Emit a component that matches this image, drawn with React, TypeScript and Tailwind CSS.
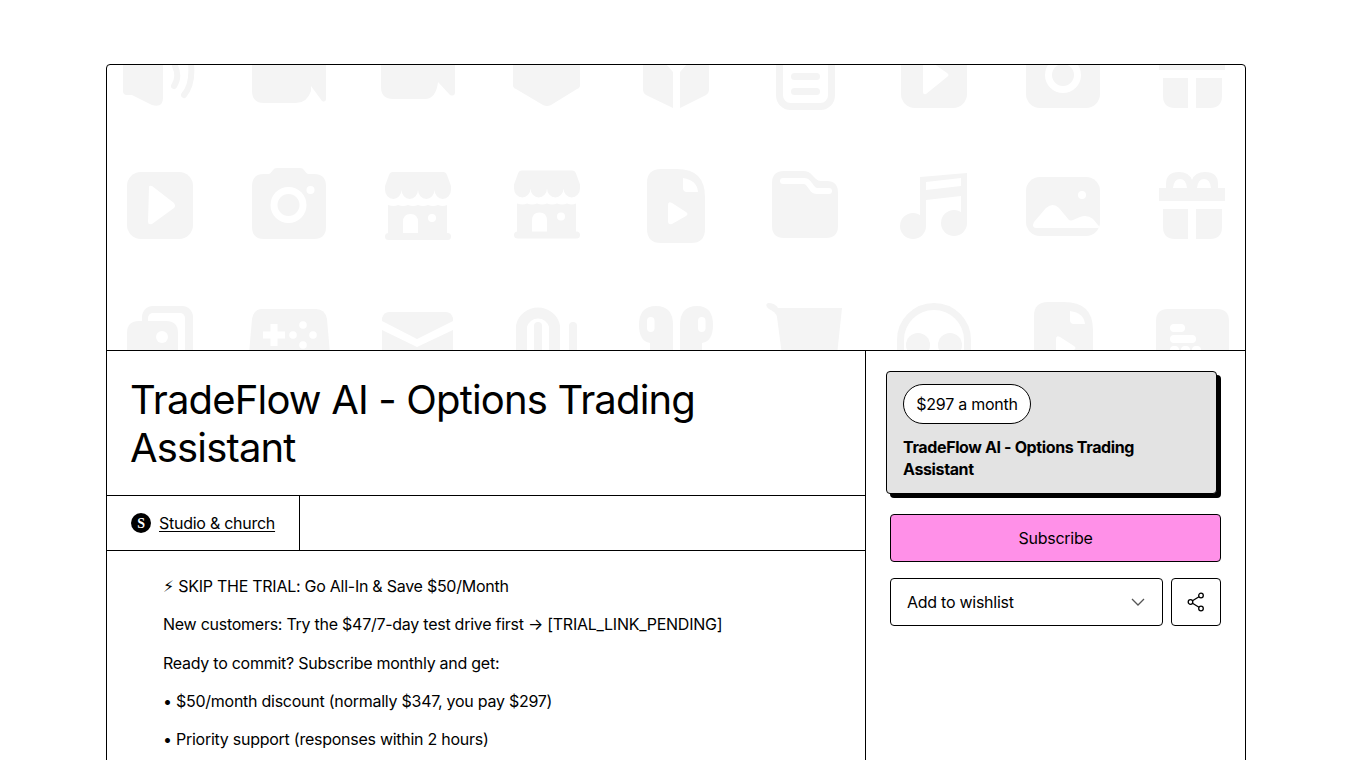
const W = "#ffffff";

function Cover() {
  return (
    <svg viewBox="107 65 1138 285" className="block h-[285px] w-full" fill="#f4f4f4">
      {/* row 1 */}
      <path d="M123 55V91q0 4 4 4h5l20 10q11 3 11-7V55z" />
      <path d="M175 66q5 11-1 20M191 64q2 20-7 31" fill="none" stroke="#f4f4f4" strokeWidth="6" strokeLinecap="round" />
      <path d="M252 55V91q0 12 12 12h32q11 0 15-12V55zM311 55V86l11 15q4 2 4-3V55z" />
      <path d="M381 55V87q0 12 12 12h32q11 0 13-17V55zM438 55V82l12 13q5 2 5-3V55z" />
      <path d="M513 55V85q0 3 3 4l27 16q4 2 8 0l26-16q3-1 3-4V55z" />
      <path d="M643 55V90q0 3 3 5l27 13V72l-7-8V55zM709 55V90q0 3-3 5l-26 13V72l7-8V55z" />
      <rect x="779.500" y="45" width="52" height="61.500" rx="11" fill="none" stroke="#f4f4f4" strokeWidth="7" />
      <rect x="791" y="73" width="29" height="7" rx="3.500" />
      <rect x="791" y="88" width="29" height="7" rx="3.500" />
      <rect x="901" y="40" width="66" height="68" rx="14" />
      <path d="M923 56V92q0 3 3 2l21-17q3-2 0-4z" fill={W} />
      <rect x="1026" y="40" width="74" height="68" rx="14" />
      <circle cx="1063" cy="75" r="18" fill={W} />
      <circle cx="1063" cy="75" r="11" />
      <rect x="1159" y="55" width="66" height="15" />
      <path d="M1163 78h25v30h-13q-12 0-12-12zM1196 78h26v18q0 12-12 12h-14z" />

      {/* row 2 */}
      <rect x="127" y="172" width="66" height="67" rx="14" />
      <path d="M149 187q0-2 3-1l22 17q2 3 0 5l-22 16q-4 1-4-2z" fill={W} />
      <path d="M252 186q0-12 12-12h5q2-1 4-4 1-2 4-2h23q3 0 4 2 2 3 4 4h6q12 0 12 12v41q0 12-12 12h-50q-12 0-12-12z" />
      <circle cx="288.500" cy="205" r="18" fill={W} />
      <circle cx="288.500" cy="205" r="11" />
      <circle cx="310.500" cy="190" r="4" fill={W} />
      {[0, 129].map((dx, i) => (
        <g key={dx} transform={`translate(${dx} ${i ? -1.5 : 0})`}>
          <path d="M393 172H443q3 0 4 3l4 11v4A8.250 9 0 0 1 434.500 190A8.250 9 0 0 1 418 190A8.250 9 0 0 1 401.500 190A8.250 9 0 0 1 385 190v-4l4-11q1-3 4-3z" />
          <path d="M388 205q6 2 10 0 5 2 10 0 5 2 10 0 5 2 10 0 5 2 10 0 5 2 9 0v30h-59z" />
          <rect x="385" y="233" width="66" height="7" rx="3.500" />
          <path d="M403 233v-11q0-8 7.500-8t7.500 8v11z" fill={W} />
          <circle cx="432" cy="218" r="4" fill={W} />
        </g>
      ))}
      <path d="M647 183q0-14 14-14h16q28 0 28 28v32q0 14-14 14h-30q-14 0-14-14z" />
      <path d="M683 178q14 2 15 14h-11q-4 0-4-4z" fill={W} />
      <path d="M668 205q0-4 4-2l14 9q3 2 0 4l-14 8q-4 1-4-3z" fill={W} />
      <path d="M772 183q0-12 12-12h19q6 0 9 4l4 4q2 2 5 2h6q11 0 11 12v33q0 12-12 12h-42q-12 0-12-12z" />
      <path d="M783 181h21q3 0 5 3l3 4q2 3 5 3h12" fill="none" stroke={W} strokeWidth="6" strokeLinecap="round" />
      <circle cx="913" cy="226" r="13" />
      <circle cx="954" cy="223" r="13" />
      <path d="M920 177l47-4v50h-6v-27l-35 4v26h-6z" />
      <path d="M926 182l35-4v8l-35 4z" fill={W} />
      <rect x="1026" y="177" width="74" height="59" rx="14" />
      <path d="M1034 222l12-14q7-6 13 0l10 12q2 1 4 0l7-3q7-3 13 2l5 6q3 3-1 3h-60q-6 0-3-6z" fill={W} />
      <circle cx="1082" cy="195" r="4" fill={W} />
      <path d="M1159 188h7v-4q0-12 13-12 10 0 13 8 3-8 13-8 13 0 13 12v4h7v13h-66z" />
      <path d="M1173 188q1-9 7-9t7 9zM1197 188q1-9 7-9t7 9z" fill={W} />
      <path d="M1163 209h25v30h-13q-12 0-12-12zM1196 209h26v18q0 12-12 12h-14z" />

      {/* row 3 */}
      <rect x="142" y="306" width="51" height="60" rx="11" />
      <rect x="148" y="313" width="37" height="60" rx="5" fill={W} />
      <path d="M127 333q0-12 12-12h27q12 0 12 12v30h-51z" />
      <circle cx="162" cy="337" r="6" fill={W} />
      <path d="M262 309h54q9 0 11 10l3 35h-81l3-35q2-10 10-10z" />
      <path d="M270.500 324h7v7.500h7.500v7h-7.500v7.500h-7v-7.500H263v-7h7.500z" fill={W} />
      <circle cx="303" cy="325" r="3.800" fill={W} />
      <circle cx="303" cy="345" r="3.800" fill={W} />
      <circle cx="293" cy="335" r="3.800" fill={W} />
      <circle cx="313" cy="335" r="3.800" fill={W} />
      <path d="M389 312h57q5 0 7 6v3l-36 18-35-18v-3q2-6 7-6z" />
      <path d="M382 330l35 17 36-17v25h-71z" />
      <path d="M521.500 355V326a17 17 0 0 1 33 0V355" fill="none" stroke="#f4f4f4" strokeWidth="11" />
      <path d="M538 355V326M573 355V326" fill="none" stroke="#f4f4f4" strokeWidth="8" strokeLinecap="round" />
      <path d="M639 325q0-19 17-19t17 19v30h-23v-12q-11-2-11-18z" />
      <path d="M713 325q0-19-16-19-17 0-17 19v30h22v-12q11-2 11-18z" />
      <rect x="647" y="317" width="7.500" height="15" rx="3.700" fill={W} />
      <rect x="698" y="317" width="7.500" height="15" rx="3.700" fill={W} />
      <path d="M768 303q7 0 10 5h64l-5 47h-55l-5-38q-1-5-8-8-5-4-1-6z" />
      <path d="M900.500 355V340a33.500 33.500 0 0 1 67 0V355" fill="none" stroke="#f4f4f4" strokeWidth="7" />
      <circle cx="918" cy="345" r="12" />
      <circle cx="950" cy="345" r="12" />
      <path d="M1034 316q0-14 14-14h16q29 0 29 28v25h-59z" />
      <path d="M1070 311q14 2 15 13h-11q-4 0-4-4z" fill={W} />
      <path d="M1056 339q0-4 4-2l14 9q3 2 0 4l-14 8q-4 1-4-3z" fill={W} />
      <path d="M1156 321q0-12 12-12h49q12 0 12 12v34h-73z" />
      <rect x="1170" y="324" width="15" height="8" rx="4" fill={W} />
      <rect x="1170" y="335" width="26" height="8" rx="4" fill={W} />
      <rect x="1170" y="346" width="9" height="8" rx="4" fill={W} />
      <rect x="1181" y="346" width="9" height="8" rx="4" fill={W} />
      <rect x="1192" y="346" width="9" height="8" rx="4" fill={W} />
    </svg>
  );
}

const lines = [
  "⚡︎ SKIP THE TRIAL: Go All-In & Save $50/Month",
  "New customers: Try the $47/7-day test drive first → [TRIAL_LINK_PENDING]",
  "Ready to commit? Subscribe monthly and get:",
  "• $50/month discount (normally $347, you pay $297)",
  "• Priority support (responses within 2 hours)",
];

export default function App() {
  return (
    <div className="h-[760px] overflow-hidden bg-white px-[106px] pt-16 font-['Inter','DejaVu_Sans',sans-serif] text-black">
      <div className="h-[760px] overflow-hidden rounded border border-black">
        <Cover />
        <div className="flex h-[500px] border-t border-black tracking-[-0.26px]">
          <div className="w-[759px] border-r border-black">
            <h1 className="border-b border-black pt-[25px] pr-6 pb-[23px] pl-[23px] text-[40px] leading-[48px] font-normal tracking-[-0.83px]">
              TradeFlow AI - Options Trading Assistant
            </h1>
            <div className="flex h-[55px] border-b border-black">
              <div className="flex items-center gap-2 border-r border-black px-6">
                <span className="flex h-5 w-5 items-center justify-center rounded-full bg-black font-['Liberation_Serif',serif] text-[14px] font-bold text-white">
                  S
                </span>
                <span className="text-base underline underline-offset-2">Studio &amp; church</span>
              </div>
            </div>
            <div className="space-y-4 px-14 pt-[23.8px] text-base leading-[22.4px]">
              {lines.map((l) => (
                <p key={l}>{l}</p>
              ))}
            </div>
          </div>
          <div className="flex flex-1 flex-col gap-4 p-6">
            <div className="-translate-x-1 -translate-y-1 rounded border border-black bg-[#e3e3e3] px-4 pt-3 pb-[13px] shadow-[4px_4px_0_#000]">
              <span className="flex h-10 w-[128px] items-center justify-center rounded-full border border-black bg-white text-base">
                $297 a month
              </span>
              <h3 className="mt-3 text-base leading-[22px] font-bold tracking-[-0.37px]">TradeFlow AI - Options Trading Assistant</h3>
            </div>
            <button className="h-12 rounded border border-black bg-[#ff90e8] text-base">Subscribe</button>
            <div className="flex gap-2">
              <button className="flex h-12 flex-1 items-center justify-between rounded border border-black pr-[17px] pl-4 text-base">
                Add to wishlist
                <svg width="14" height="8" viewBox="0 0 14 8" fill="none" stroke="#555" strokeWidth="1.300">
                  <path d="M1 1l6 6 6-6" />
                </svg>
              </button>
              <button className="flex h-12 w-[50px] items-center justify-center rounded border border-black">
                <svg width="18" height="20" viewBox="0 0 18 20" fill="none" stroke="#000" strokeWidth="1.300">
                  <circle cx="14" cy="3.500" r="2.300" />
                  <circle cx="3.500" cy="10" r="2.300" />
                  <circle cx="14" cy="16.500" r="2.300" />
                  <path d="M12 4.700L5.500 8.800M5.500 11.200L12 15.300" />
                </svg>
              </button>
            </div>
          </div>
        </div>
      </div>
    </div>
  );
}
